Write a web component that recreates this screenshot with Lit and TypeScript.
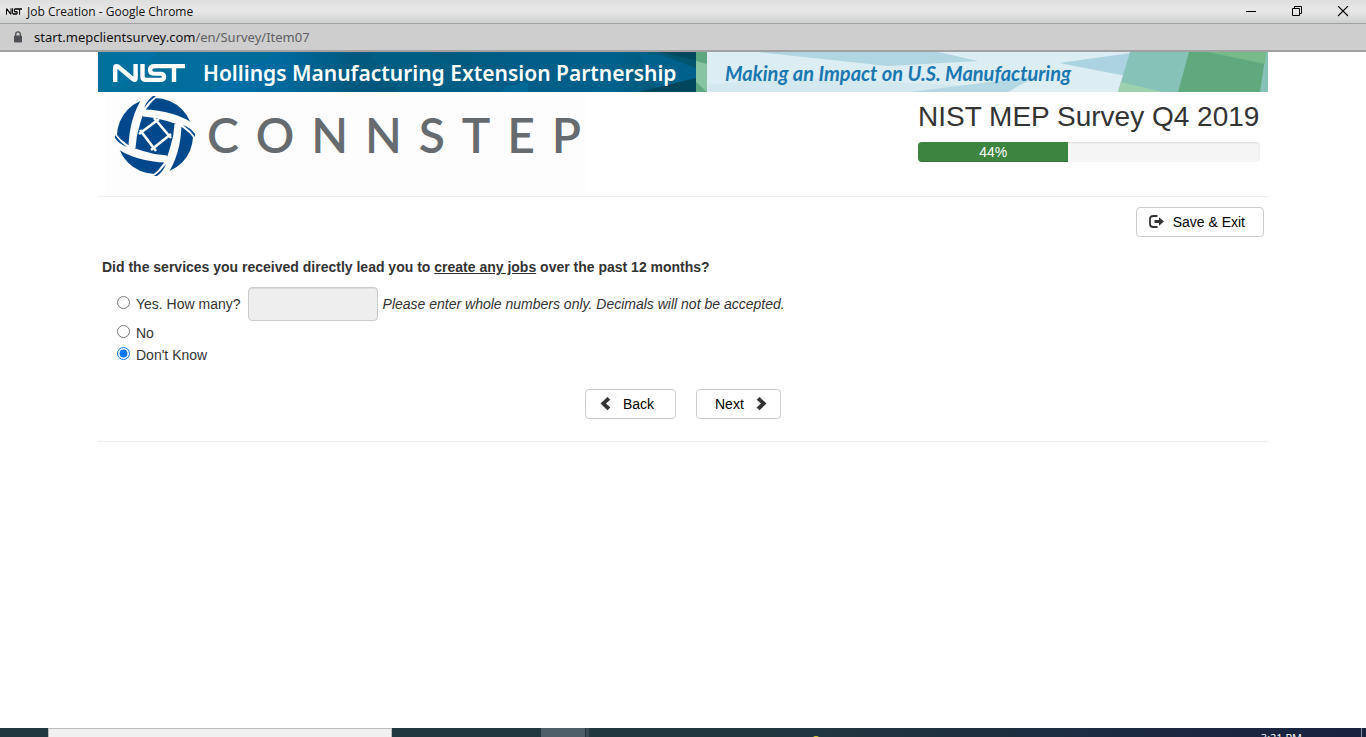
import { LitElement, html, css, svg } from "lit";
import { customElement, state } from "lit/decorators.js";

const nistMark = (color: string) => svg`
  <g fill="none" stroke=${color} stroke-width="4.4" stroke-linejoin="round">
    <path d="M2.2 20V5Q2.2 2.2 4.8 3.6L20 17Q22.6 19 22.6 16V1"/>
    <path d="M29.500 1V14.500Q29.500 17.800 33 17.800H47.500Q51 17.800 51 14.500Q51 11.300 47.500 11.300H42Q37 11.300 37 7Q37 3.200 42 3.200H72"/>
    <path d="M61 3V20"/>
  </g>`;

@customElement("browser-frame")
class BrowserFrame extends LitElement {
  static styles = css`
    :host { display: block; color: #111; font-family: "Noto Sans", "Open Sans", sans-serif; }
    .title {
      display: flex; align-items: center; height: 23px; padding-left: 6px; gap: 5px;
      font-family: "Open Sans", sans-serif; font-size: 12px;
      background: linear-gradient(#dedede, #e8e8e8 45%, #cfd0d1);
      border-bottom: 1px solid #a2a2a2;
    }
    .name { flex: 1; }
    .favicon { width: 16px; height: 7px; }
    .controls { display: flex; }
    .control {
      width: 46px; height: 22px; padding: 0; border: 0; background: none;
      display: grid; place-items: center;
    }
    .address {
      display: flex; align-items: center; gap: 11px; height: 26px; padding-left: 13px;
      background: #cecece; border-bottom: 2px solid #a1a1a1;
      font-size: 13px;
    }
    .path { color: #5d5f62; }
  `;
  render() {
    return html`
      <div class="title">
        <svg class="favicon" viewBox="0 0 72 21" preserveAspectRatio="none" aria-hidden="true">${nistMark("#000")}</svg>
        <span class="name">Job Creation - Google Chrome</span>
        <div class="controls">
          <button class="control" aria-label="Minimize">
            <svg width="12" height="12"><path d="M1 5.500H11" stroke="#000"/></svg>
          </button>
          <button class="control" aria-label="Restore">
            <svg width="12" height="12" fill="none" stroke="#000"><path d="M1.500 2.500h7v7h-7zM3.500 2V.500h7v7H9"/></svg>
          </button>
          <button class="control" aria-label="Close">
            <svg width="12" height="12"><path d="M1 0L11 10M11 0L1 10" stroke="#000" stroke-width="1.100"/></svg>
          </button>
        </div>
      </div>
      <div class="address">
        <svg width="10" height="12" viewBox="0 0 10 12" aria-hidden="true">
          <rect x="1" y="4.500" width="8" height="7" rx="1" fill="#4d5054"/>
          <path d="M2.700 5V3.200a2.300 2.300 0 0 1 4.600 0V5" fill="none" stroke="#4d5054" stroke-width="1.300"/>
        </svg>
        <span>start.mepclientsurvey.com<span class="path">/en/Survey/Item07</span></span>
      </div>`;
  }
}

@customElement("survey-banner")
class SurveyBanner extends LitElement {
  static styles = css`
    :host { display: grid; height: 40px; overflow: hidden; }
    .art, .words { grid-area: 1 / 1; min-width: 0; }
    .art { width: 100%; height: 40px; display: block; }
    .words { display: flex; align-items: center; padding-left: 15px; white-space: nowrap; }
    .mark { width: 72px; height: 20px; margin-right: 18px; }
    .program { width: 522px; color: #fff; font: 600 21px/42px "Noto Sans", sans-serif; }
    .tagline { color: #1a77b0; font: italic 700 20px/42px Lato, sans-serif; }
  `;
  render() {
    return html`
      <svg class="art" viewBox="0 0 1170 40" preserveAspectRatio="none" aria-hidden="true">
        <defs>
          <linearGradient id="sea">
            <stop offset="0" stop-color="#00709a"/><stop offset=".16" stop-color="#0072b0"/>
            <stop offset=".3" stop-color="#006a9f"/><stop offset=".42" stop-color="#005a80"/>
            <stop offset=".55" stop-color="#005a7c"/><stop offset=".7" stop-color="#005d87"/>
            <stop offset=".86" stop-color="#00618c"/><stop offset="1" stop-color="#00536a"/>
          </linearGradient>
        </defs>
        <rect width="598" height="40" fill="url(#sea)"/>
        <path d="M60 0H180L110 40H20z" fill="#006d92" opacity=".6"/>
        <path d="M240 40L280 28L330 40z" fill="#005379" opacity=".6"/>
        <path d="M270 0H330L410 40H300z" fill="#00618c" opacity=".5"/>
        <path d="M410 34L430 30V40H402z" fill="#0076a5" opacity=".5"/>
        <path d="M540 0L566 4L598 16V40H560z" fill="#00618c"/>
        <path d="M560 0H598V8z" fill="#00495c"/>
        <path d="M540 40L598 26V40z" fill="#00465c"/>
        <rect x="598" width="11" height="40" fill="#5ca780"/>
        <path d="M598 9L609 12V40L598 30z" fill="#86c4a2"/>
        <rect x="609" width="561" height="40" fill="#dcedf3"/>
        <path d="M660 0H840L880 9L790 14z" fill="#afd6e1"/>
        <path d="M609 33L700 26L1018 40H609z" fill="#cae4ec" opacity=".5"/>
        <path d="M812 40L940 24L1020 40z" fill="#b4d9e4"/>
        <path d="M961 11L1040 0H1080V34z" fill="#abd3e2"/>
        <path d="M961 11L1020 27V40H910z" fill="#dcedf3"/>
        <path d="M1032 0H1170V40H1020z" fill="#86c2b8"/>
        <path d="M1023 30L1065 40H1020z" fill="#9ed2ae"/>
        <path d="M1091 0H1168L1162 40H1080z" fill="#60a97f"/>
        <path d="M1110 0H1168L1167 12z" fill="#78ba8a"/>
      </svg>
      <div class="words">
        <svg class="mark" viewBox="0 0 72 21" preserveAspectRatio="none" role="img" aria-label="NIST">${nistMark("#fff")}</svg>
        <span class="program">Hollings Manufacturing Extension Partnership</span>
        <span class="tagline">Making an Impact on U.S. Manufacturing</span>
      </div>`;
  }
}

@customElement("connstep-logo")
class ConnstepLogo extends LitElement {
  static styles = css`
    :host { display: flex; align-items: flex-start; width: 480px; height: 96px; background: #fdfdfd; }
    .emblem { width: 82px; height: 80px; margin-left: 8px; }
    .word {
      display: flex; justify-content: space-between; width: 374px; margin: 9px 0 0 11px;
      color: #666b6f; font: 600 48px/60px Lato, sans-serif;
    }
  `;
  render() {
    return html`
      <svg class="emblem" viewBox="0 0 82 80" aria-hidden="true">
        <circle cx="41" cy="40" r="38" fill="#00488b"/>
        ${[0, 90, 180, 270].map(a => svg`
          <g transform="rotate(${a} 41 40)">
            <path d="M14.500 52Q15 20 31 -2L47 -2Q30 10 26 28Q22 40 21.500 52z" fill="#fdfdfd"/>
            <path d="M30 12Q33 4 39 0H42Q35 5 30 12z" fill="#00488b"/>
          </g>`)}
        <g fill="none" stroke="#fdfdfd" stroke-width="2.600">
          <path d="M25 38L45 23M40 22L57 42M57 38L37 54M42 55L26 34"/>
        </g>
      </svg>
      <div class="word" role="img" aria-label="CONNSTEP">
        ${[..."CONNSTEP"].map(c => html`<span>${c}</span>`)}
      </div>`;
  }
}

@customElement("task-bar")
class TaskBar extends LitElement {
  static styles = css`
    :host {
      display: flex; height: 9px; overflow: hidden;
      background: linear-gradient(90deg, #21383e, #21383e 38%, #203640 60%, #1b2740 88%, #18233f);
    }
    .search { width: 342px; margin-left: 48px; border: 1px solid #b9bdbd; border-bottom: 0; background: #f0f0f0; }
    .app { width: 44px; margin-left: 149px; background: #4e5f68; border-right: 1px solid #26353b; }
    .edge { width: 3px; background: #3a4c54; }
    .badge { width: 10px; height: 10px; margin: 8px 0 0 222px; border-radius: 5px; background: #d8cf2c; }
    .clock { margin: 2px 59px 0 auto; color: #fff; font: 11px/16px "Open Sans", sans-serif; }
    .desktop { margin-left: 0; border-left: 1px solid #8a909c; width: 4px; }
  `;
  render() {
    return html`<div class="search"></div><div class="app"></div><div class="edge"></div>
      <div class="badge"></div><span class="clock">3:21 PM</span><div class="desktop"></div>`;
  }
}

@customElement("app-root")
class AppRoot extends LitElement {
  @state() answer = "unknown";
  static styles = css`
    :host {
      display: flex; flex-direction: column; min-height: 100vh; background: #fff; color: #333;
      font: 14px/20px "Liberation Sans", Arial, sans-serif;
    }
    * { box-sizing: border-box; }
    main { flex: 1; width: 100%; max-width: 1170px; margin: 0 auto; }
    .head {
      display: flex; justify-content: space-between; align-items: flex-start;
      padding: 4px 8px 4px; border-bottom: 1px solid #eee;
    }
    .status { width: 342px; }
    h1 { margin: 4px 0 9px; font-size: 28px; line-height: 33px; font-weight: 400; white-space: nowrap; }
    .progress {
      height: 20px; border-radius: 4px; overflow: hidden; background: #f5f5f5;
      box-shadow: inset 0 1px 2px rgba(0, 0, 0, 0.1);
    }
    .bar {
      height: 100%; background: #3d843f; color: #fff; text-align: center;
      box-shadow: inset 0 -1px 0 rgba(0, 0, 0, 0.15);
    }
    .exit { display: flex; justify-content: flex-end; padding: 10px 4px 0; }
    .btn {
      display: flex; align-items: center; height: 30px; padding: 0 18px 0 12px; gap: 9px;
      border: 1px solid #ccc; border-radius: 4px; background: #fff; color: #000; font: inherit;
    }
    .back { width: 91px; padding: 0 14px; gap: 11px; }
    .next { width: 85px; padding: 0 10px 0 18px; gap: 11px; }
    fieldset { margin: 0; padding: 20px 4px 0; border: 0; }
    legend { float: left; width: 100%; padding: 0; font-weight: 700; margin-bottom: 10px; }
    .options { clear: both; padding-left: 15px; }
    .option { display: flex; align-items: center; height: 22px; }
    .wide { height: 34px; margin-bottom: 1px; }
    .option input[type="radio"] { width: 13px; height: 13px; margin: 0 6px 4px 0; accent-color: #0075ff; }
    .count {
      width: 130px; height: 34px; margin: 0 5px 0 7px; padding: 6px 12px; font: inherit;
      border: 1px solid #ccc; border-radius: 4px; background: #eee;
      box-shadow: inset 0 1px 1px rgba(0, 0, 0, 0.075);
    }
    .pager {
      display: flex; justify-content: center; gap: 20px; padding: 23px 0 22px;
      border-bottom: 1px solid #eee;
    }
  `;
  private pick(e: Event) {
    this.answer = (e.target as HTMLInputElement).value;
  }
  private radio(value: string) {
    return html`<input type="radio" name="jobs" id=${value} value=${value}
      .checked=${this.answer === value} @change=${this.pick}>`;
  }
  render() {
    const progress = 44;
    return html`
      <browser-frame></browser-frame>
      <main>
        <survey-banner></survey-banner>
        <header class="head">
          <connstep-logo></connstep-logo>
          <div class="status">
            <h1>NIST MEP Survey Q4 2019</h1>
            <div class="progress" role="progressbar" aria-valuenow=${progress} aria-valuemin="0" aria-valuemax="100">
              <div class="bar" style="width:${progress}%">${progress}%</div>
            </div>
          </div>
        </header>
        <div class="exit">
          <button class="btn">
            <svg width="15" height="14" viewBox="0 0 15 14" aria-hidden="true">
              <path d="M8.500 1H4.200Q1 1 1 4V9Q1 12 4.200 12H8.500" fill="none" stroke="#333" stroke-width="1.800"/>
              <path d="M5.500 5H10V2.300L15 6.500L10 10.700V8H5.500z" fill="#333"/>
            </svg>
            Save &amp; Exit
          </button>
        </div>
        <fieldset>
          <legend>Did the services you received directly lead you to <u>create any jobs</u> over the past 12 months?</legend>
          <div class="options">
            <div class="option wide">
              ${this.radio("yes")}<label for="yes">Yes. How many?</label>
              <input class="count" type="text" aria-label="Number of jobs" ?disabled=${this.answer !== "yes"}>
              <em>Please enter whole numbers only. Decimals will not be accepted.</em>
            </div>
            <div class="option">${this.radio("no")}<label for="no">No</label></div>
            <div class="option">${this.radio("unknown")}<label for="unknown">Don't Know</label></div>
          </div>
        </fieldset>
        <div class="pager">
          <button class="btn back">
            <svg width="12" height="14" viewBox="0 0 12 14" aria-hidden="true">
              <path d="M.500 6.500L7.500 0L10.300 2.700L6 6.500L10.300 10.500L7.500 13.200z" fill="#333"/>
            </svg>
            Back
          </button>
          <button class="btn next">
            Next
            <svg width="12" height="14" viewBox="0 0 12 14" aria-hidden="true">
              <path d="M11.500 6.500L4.500 0L1.700 2.700L6 6.500L1.700 10.500L4.500 13.200z" fill="#333"/>
            </svg>
          </button>
        </div>
      </main>
      <task-bar></task-bar>`;
  }
}
